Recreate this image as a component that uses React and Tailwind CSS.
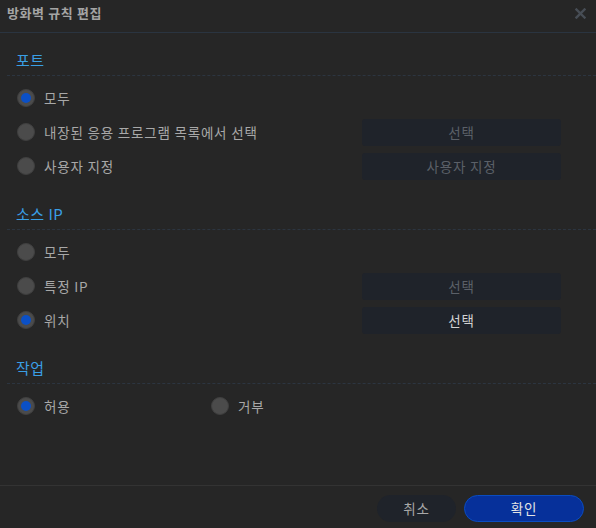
import React from 'react';

const Radio = ({ checked, label }) => (
  <div className="flex items-center gap-[9px]">
    <span className="flex h-[18px] w-[18px] items-center justify-center rounded-full border border-[#3f3f3f] bg-[#4b4b4b]">
      {checked && <span className="h-[10px] w-[10px] rounded-full bg-[#0b50c6]" />}
    </span>
    <span className="text-[13.5px] tracking-[0.8px] text-[#a8a8a8]">{label}</span>
  </div>
);

const SideButton = ({ label, disabled }) => (
  <button
    className={
      'mr-[35px] h-[27px] w-[199px] rounded-[3px] bg-[#1f232a] text-[13.5px] tracking-[0.8px] ' +
      (disabled ? 'text-[#5b6068]' : 'text-[#d2d2d2]')
    }
  >
    {label}
  </button>
);

const Row = ({ checked, label, button, disabled }) => (
  <div className="flex h-[34px] items-center pl-[10px]">
    <div className="flex-1">
      <Radio checked={checked} label={label} />
    </div>
    {button && <SideButton label={button} disabled={disabled} />}
  </div>
);

const Section = ({ title, first, children }) => (
  <div className={first ? 'pt-[17px]' : 'pt-[21px]'}>
    <div className="border-b border-dashed border-[#2c3540] pb-[5px] pl-[9px]">
      <h2 className="h-[20px] text-[15px] leading-[20px] tracking-[0.5px] text-[#3a9fe5]">{title}</h2>
    </div>
    <div className="pt-[5px]">{children}</div>
  </div>
);

export default function App() {
  return (
    <div
      className="flex h-[528px] w-[596px] flex-col bg-[#262626]"
      style={{ fontFamily: '"Noto Sans CJK KR", "Noto Sans", sans-serif' }}
    >
      {/* Header */}
      <div className="flex h-[33px] items-start justify-between border-b border-[#2a3440] pl-[7px] pr-[10px] pt-[4px]">
        <span className="text-[13px] font-bold leading-[18px] tracking-[0.6px] text-[#a4a4a4]">방화벽 규칙 편집</span>
        <svg width="11" height="11" viewBox="0 0 11 11" className="mt-[4px]">
          <path d="M1.5 1.5 L9.5 9.5 M9.5 1.5 L1.5 9.5" stroke="#474d55" strokeWidth="2.4" strokeLinecap="square" />
        </svg>
      </div>

      {/* Body */}
      <div className="flex-1 pl-[7px]">
        <Section title="포트" first>
          <Row checked label="모두" />
          <Row label="내장된 응용 프로그램 목록에서 선택" button="선택" disabled />
          <Row label="사용자 지정" button="사용자 지정" disabled />
        </Section>

        <Section title="소스 IP">
          <Row label="모두" />
          <Row label="특정 IP" button="선택" disabled />
          <Row checked label="위치" button="선택" />
        </Section>

        <Section title="작업">
          <div className="flex h-[34px] items-center pl-[10px]">
            <div className="w-[194px]">
              <Radio checked label="허용" />
            </div>
            <Radio label="거부" />
          </div>
        </Section>
      </div>

      {/* Footer */}
      <div className="flex h-[43px] items-start justify-end gap-[8px] border-t border-[#333333] pr-[12px] pt-[9px]">
        <button className="h-[27px] w-[79px] rounded-full bg-[#1f232a] text-[13.5px] tracking-[0.8px] text-[#a8a8a8]">취소</button>
        <button className="h-[27px] w-[120px] rounded-full border border-[#0a4cc0] bg-[#06309a] text-[13.5px] tracking-[0.8px] text-[#e4e4e4]">
          확인
        </button>
      </div>
    </div>
  );
}
